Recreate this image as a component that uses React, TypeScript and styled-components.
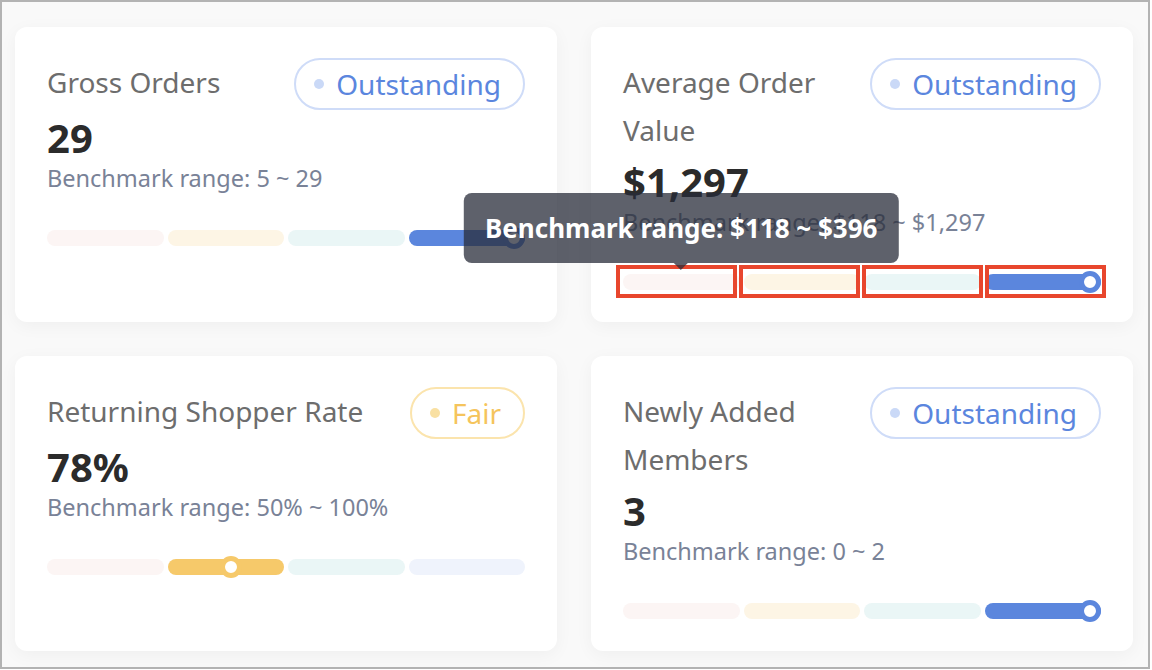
import React from "react";
import styled, { createGlobalStyle } from "styled-components";

type Level = "outstanding" | "fair";

const levels = {
  outstanding: {
    label: "Outstanding",
    text: "#5b86de",
    border: "#cfdcf8",
    dot: "#cad9f7",
    bar: "#5b86dd",
    segment: 3,
  },
  fair: {
    label: "Fair",
    text: "#f5c45c",
    border: "#fbe4ad",
    dot: "#f9e0a2",
    bar: "#f6c96a",
    segment: 1,
  },
};

const segmentColors = ["#fcf5f4", "#fdf5e5", "#eaf6f6", "#eff3fc"];

const metrics: {
  title: string;
  value: string;
  range: string;
  level: Level;
  position: number;
  inspect?: boolean;
}[] = [
  { title: "Gross Orders", value: "29", range: "5 ~ 29", level: "outstanding", position: 1 },
  {
    title: "Average Order Value",
    value: "$1,297",
    range: "$118 ~ $1,297",
    level: "outstanding",
    position: 1,
    inspect: true,
  },
  { title: "Returning Shopper Rate", value: "78%", range: "50% ~ 100%", level: "fair", position: 0.56 },
  { title: "Newly Added Members", value: "3", range: "0 ~ 2", level: "outstanding", position: 1 },
];

function App() {
  return (
    <>
      <GlobalStyle />
      <Frame>
        {metrics.map((m) => {
          const lv = levels[m.level];
          return (
            <Card key={m.title}>
              <Header>
                <Title>{m.title}</Title>
                <Badge $color={lv.text} $border={lv.border}>
                  <Dot $color={lv.dot} />
                  {lv.label}
                </Badge>
              </Header>
              <Value>{m.value}</Value>
              <Range>Benchmark range: {m.range}</Range>
              <Track>
                {segmentColors.map((c, i) => (
                  <Segment key={i} $color={i === lv.segment ? lv.bar : c}>
                    {i === lv.segment && (
                      <Knob
                        $color={lv.bar}
                        style={{ left: `calc(${m.position} * (100% - 22px))` }}
                      />
                    )}
                    {m.inspect && i === 0 && (
                      <Tooltip>Benchmark range: $118 ~ $396</Tooltip>
                    )}
                  </Segment>
                ))}
                {m.inspect && (
                  <Highlights>
                    <HighlightBox />
                    <HighlightBox />
                    <HighlightBox />
                    <HighlightBox />
                  </Highlights>
                )}
              </Track>
            </Card>
          );
        })}
      </Frame>
    </>
  );
}

const GlobalStyle = createGlobalStyle`
  html, body {
    margin: 0;
    background: #ffffff;
    font-family: "Noto Sans", "Open Sans", sans-serif;
  }
`;

const Frame = styled.div`
  box-sizing: border-box;
  width: 1150px;
  height: 669px;
  border: 2px solid #b3b3b3;
  background: #f9f9f9;
  padding: 25px 13px;
  display: grid;
  grid-template-columns: 542px 542px;
  column-gap: 34px;
  row-gap: 34px;
  align-content: start;
`;

const Card = styled.div`
  position: relative;
  background: #ffffff;
  border-radius: 12px;
  box-shadow: 0 4px 18px rgba(0, 0, 0, 0.045);
  padding: 31px 32px 32px;
  display: flex;
  flex-direction: column;
`;

const Header = styled.div`
  display: flex;
  justify-content: space-between;
  align-items: flex-start;
  gap: 24px;
`;

const Title = styled.div`
  flex: 1;
  min-width: 0;
  font-size: 28px;
  line-height: 48px;
  color: #6d6d6d;
`;

const Badge = styled.div<{ $color: string; $border: string }>`
  flex: none;
  box-sizing: border-box;
  height: 52px;
  display: inline-flex;
  align-items: center;
  gap: 12px;
  padding: 0 22px 0 18px;
  border: 2px solid ${(p) => p.$border};
  border-radius: 26px;
  font-size: 28px;
  line-height: 1;
  color: ${(p) => p.$color};
`;

const Dot = styled.span<{ $color: string }>`
  width: 10px;
  height: 10px;
  border-radius: 50%;
  background: ${(p) => p.$color};
`;

const Value = styled.div`
  font-size: 40px;
  font-weight: 700;
  color: #2b2b2b;
`;

const Range = styled.div`
  font-size: 23.5px;
  line-height: 27px;
  color: #798297;
`;

const Track = styled.div`
  position: relative;
  margin-top: 38px;
  display: flex;
  gap: 4px;
  height: 16px;
`;

const Segment = styled.div<{ $color: string }>`
  position: relative;
  flex: 1;
  height: 16px;
  border-radius: 8px;
  background: ${(p) => p.$color};
`;

const Knob = styled.span<{ $color: string }>`
  position: absolute;
  top: 50%;
  width: 22px;
  height: 22px;
  box-sizing: border-box;
  border: 5px solid ${(p) => p.$color};
  border-radius: 50%;
  background: #ffffff;
  transform: translateY(-50%);
`;

const Tooltip = styled.div`
  position: absolute;
  z-index: 3;
  left: 50%;
  bottom: calc(100% + 11px);
  transform: translateX(-50%);
  white-space: nowrap;
  height: 70px;
  display: flex;
  align-items: center;
  padding: 0 21px;
  border-radius: 8px;
  background: rgba(40, 44, 58, 0.75);
  color: #ffffff;
  font-size: 26px;
  font-weight: 700;

  &::after {
    content: "";
    position: absolute;
    top: 100%;
    left: 50%;
    margin-left: -7px;
    border: 7px solid transparent;
    border-top-color: rgba(40, 44, 58, 0.75);
  }
`;

const Highlights = styled.div`
  position: absolute;
  z-index: 2;
  top: -9px;
  bottom: -8px;
  left: -7px;
  right: -5px;
  display: flex;
  gap: 2px;
  pointer-events: none;
`;

const HighlightBox = styled.div`
  flex: 1;
  border: 4px solid #e8462d;
`;

export default App;
